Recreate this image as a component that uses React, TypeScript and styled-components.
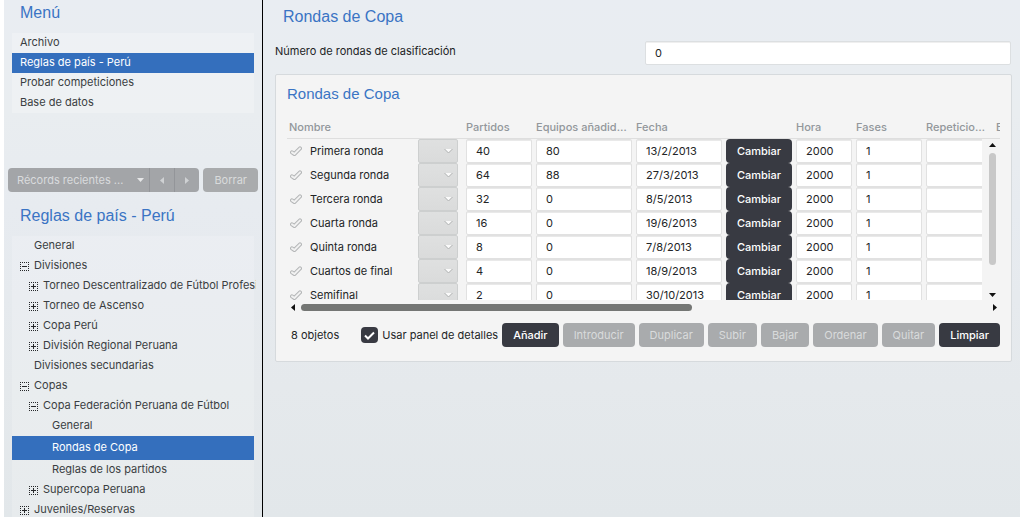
import React from "react";
import styled, { createGlobalStyle, css } from "styled-components";

const sans = `Inter, "Liberation Sans", Arial, sans-serif`;
const display = `"Liberation Sans", Arial, sans-serif`;

const GlobalStyle = createGlobalStyle`
  *, *::before, *::after { box-sizing: border-box; }
  body { margin: 0; background: #fff; }
  button, input, select { font: inherit; color: inherit; }
`;

const Page = styled.div`
  display: grid;
  grid-template-columns: 259px minmax(0, 1fr);
  height: 100vh;
  margin: 0 4px;
  overflow: hidden;
  background: linear-gradient(#e9edf2, #e9edf0 22%, #e7ebf0 40%, #e5e9ec 75%, #e2e7ea);
  color: #222426;
  font: 11px/20px ${sans};
`;

const Sidebar = styled.aside`
  display: flex;
  flex-direction: column;
  min-width: 0;
  min-height: 0;
  padding: 1px 8px 0;
  border-right: 1px solid #000;
  color: #3a3e42;
`;

const Heading = styled.h2`
  margin: 0;
  padding: 0 8px;
  font: 400 16px/24px ${display};
  color: #3a74c4;
`;

const Menu = styled.ul`
  margin: 8px 0 0;
  padding: 0;
  height: 80px;
  list-style: none;
  background: rgba(255, 255, 255, 0.22);
`;

const Tree = styled.ul`
  flex: 1;
  min-height: 0;
  margin: 8px 0 0;
  padding: 0;
  overflow: clip;
  overflow-clip-margin: 2px;
  list-style: none;
  background: rgba(255, 255, 255, 0.18);
`;

const EntryButton = styled.button<{ $active?: boolean; $tall?: boolean; $depth?: number }>`
  display: flex;
  align-items: center;
  gap: 5px;
  width: 100%;
  height: ${(p) => (p.$tall ? 24 : 20)}px;
  padding: 0 0 2px ${(p) => 8 + (p.$depth ?? 0) * 9}px;
  border: 0;
  overflow: clip;
  overflow-clip-margin: 2px;
  text-align: left;
  white-space: nowrap;
  background: ${(p) => (p.$active ? "#346fbd" : "transparent")};
  color: ${(p) => (p.$active ? "#fff" : "inherit")};
`;

const IconSlot = styled.span`
  flex: none;
  width: 9px;
  height: 9px;
  margin-top: 2px;
  line-height: 0;
`;

const Recent = styled.div`
  display: flex;
  gap: 4px;
  margin: 55px -4px 12px;
`;

const Segments = styled.div`
  display: flex;
  flex: 1;
  border-radius: 4px;
  overflow: hidden;
  background: #a3a5a8;
`;

const Segment = styled.button<{ $wide?: boolean }>`
  display: flex;
  align-items: center;
  justify-content: ${(p) => (p.$wide ? "space-between" : "center")};
  flex: ${(p) => (p.$wide ? "1" : "0 0 25px")};
  height: 24px;
  padding: ${(p) => (p.$wide ? "0 5px 0 9px" : "0")};
  border: 0;
  border-left: ${(p) => (p.$wide ? "0" : "1px solid #939599")};
  background: none;
  color: #d9dbdd;
  white-space: nowrap;
`;

const Button = styled.button<{ $block?: boolean }>`
  flex: none;
  height: 24px;
  padding: 0 11px;
  border: 0;
  border-radius: 4px;
  background: #383a42;
  color: #fff;
  font-weight: 500;
  line-height: 24px;
  white-space: nowrap;
  ${(p) => p.$block && css`display: block; width: 100%; padding: 0;`}
  &:disabled {
    background: #a9abad;
    color: #d9dbdc;
    font-weight: 400;
  }
`;

const Main = styled.main`
  min-width: 0;
  padding: 5px 8px 0 12px;
`;

const Field = styled.div`
  display: grid;
  grid-template-columns: 1fr 1fr;
  gap: 4px;
  margin: 12px 1px 9px 0;
`;

const boxed = css`
  width: 100%;
  padding: 0 9px;
  border: 1px solid #dcdfe1;
  border-radius: 2px;
  background: #fff;
  box-shadow: inset 0 1px 0 #efefef;
  outline: 0;
`;

const TextInput = styled.input`
  ${boxed}
  height: 24px;
`;

const CellInput = styled.input`
  ${boxed}
  display: block;
  height: 24px;
  border-color: #e1e1e1;
  box-shadow: inset 0 1px 0 #e9e9e9;
`;

const Panel = styled.section`
  padding: 8px 11px 14px;
  border: 1px solid #d6dadd;
  border-radius: 2px;
  background: #f4f4f4;
`;

const PanelTitle = styled.h3`
  margin: 0;
  font: 400 15px/22px ${display};
  color: #3a74c4;
`;

const Viewport = styled.div`
  position: relative;
  height: 195px;
  overflow: hidden;
`;

const Grid = styled.table`
  width: 781px;
  table-layout: fixed;
  border-collapse: separate;
  border-spacing: 0;
`;

const HeaderCell = styled.th`
  height: 34px;
  padding: 11px 8px 0 0;
  border-bottom: 1px solid #dedede;
  overflow: hidden;
  text-align: left;
  text-overflow: ellipsis;
  white-space: nowrap;
  font-weight: 500;
  color: #92979b;
  &:first-child { padding-left: 2px; }
`;

const Cell = styled.td<{ $gap?: number }>`
  height: 24px;
  padding: 0 ${(p) => p.$gap ?? 4}px 0 0;
`;

const NameBox = styled.div`
  display: flex;
  align-items: center;
  gap: 8px;
  padding-left: 3px;
`;

const SelectBox = styled.div`
  display: grid;
  align-items: center;
  > * { grid-area: 1 / 1; }
  > svg { justify-self: end; margin-right: 5px; pointer-events: none; }
`;

const Drop = styled.select`
  width: 100%;
  height: 24px;
  appearance: none;
  border: 1px solid #cdcfcf;
  border-radius: 2px;
  background: linear-gradient(#dfe0e0, #dadbdb);
  opacity: 1;
`;

const VerticalBar = styled.div`
  position: absolute;
  top: 34px;
  right: 0;
  bottom: 0;
  display: flex;
  flex-direction: column;
  align-items: center;
  justify-content: space-between;
  width: 18px;
  padding: 4px 0 3px 3px;
  background: #f4f4f4;
`;

const VerticalThumb = styled.div`
  width: 7px;
  height: 112px;
  margin: 6px 0 auto;
  border-radius: 4px;
  background: #c8c8c8;
`;

const HorizontalBar = styled.div`
  display: flex;
  align-items: center;
  height: 15px;
  padding: 0 3px 0 4px;
`;

const HorizontalThumb = styled.div`
  width: 391px;
  height: 7px;
  margin: 0 auto 0 6px;
  border-radius: 4px;
  background: #747674;
`;

const Footer = styled.footer`
  display: flex;
  align-items: center;
  gap: 4px;
  margin-top: 8px;
  padding-left: 4px;
`;

const Count = styled.span`
  margin-right: auto;
`;

const CheckLabel = styled.label`
  display: flex;
  align-items: center;
  gap: 4px;
  white-space: nowrap;
`;

const CheckBox = styled.span`
  display: grid;
  place-items: center;
  > * { grid-area: 1 / 1; }
  > svg { pointer-events: none; }
  input {
    width: 17px;
    height: 16px;
    margin: 0;
    appearance: none;
    border-radius: 4px;
    background: #383a42;
  }
`;

function Toggle({ open }: { open?: boolean }) {
  return (
    <svg width="9" height="9" viewBox="0 0 9 9">
      <path d="M0 .5H9M0 8.5H9M.5 0V9M8.5 0V9" stroke="#26282a" strokeDasharray="1 1" fill="none" />
      <path d={open ? "M2 4.5H7" : "M2 4.5H7M4.5 2V7"} stroke="#26282a" fill="none" />
    </svg>
  );
}

const arrowPaths = {
  up: "M0 4L3.5 0L7 4Z",
  down: "M0 0H7L3.5 4Z",
  left: "M4 0V7L0 3.5Z",
  right: "M0 0V7L4 3.5Z",
};

function Arrow({ to, color }: { to: keyof typeof arrowPaths; color: string }) {
  const flat = to === "up" || to === "down";
  return (
    <svg width={flat ? 7 : 4} height={flat ? 4 : 7}>
      <path d={arrowPaths[to]} fill={color} />
    </svg>
  );
}

function Tick() {
  const mark = "M2 6.4L4.4 8L10 2.4";
  return (
    <svg width="12" height="11" viewBox="0 0 12 11" fill="none" strokeLinecap="round" strokeLinejoin="round">
      <path d={mark} stroke="#b4b6b7" strokeWidth="4" />
      <path d={mark} stroke="#f1f1f1" strokeWidth="2" />
    </svg>
  );
}

const menuItems = ["Archivo", "Reglas de país - Perú", "Probar competiciones", "Base de datos"];

type TreeNode = { text: string; depth: number; toggle?: "open" | "closed"; active?: boolean };

const nodes: TreeNode[] = [
  { text: "General", depth: 0 },
  { text: "Divisiones", depth: 0, toggle: "open" },
  { text: "Torneo Descentralizado de Fútbol Profesional", depth: 1, toggle: "closed" },
  { text: "Torneo de Ascenso", depth: 1, toggle: "closed" },
  { text: "Copa Perú", depth: 1, toggle: "closed" },
  { text: "División Regional Peruana", depth: 1, toggle: "closed" },
  { text: "Divisiones secundarias", depth: 0 },
  { text: "Copas", depth: 0, toggle: "open" },
  { text: "Copa Federación Peruana de Fútbol", depth: 1, toggle: "open" },
  { text: "General", depth: 2 },
  { text: "Rondas de Copa", depth: 2, active: true },
  { text: "Reglas de los partidos", depth: 2 },
  { text: "Supercopa Peruana", depth: 1, toggle: "closed" },
  { text: "Juveniles/Reservas", depth: 0, toggle: "closed" },
];

const rounds = [
  ["Primera ronda", "40", "80", "13/2/2013"],
  ["Segunda ronda", "64", "88", "27/3/2013"],
  ["Tercera ronda", "32", "0", "8/5/2013"],
  ["Cuarta ronda", "16", "0", "19/6/2013"],
  ["Quinta ronda", "8", "0", "7/8/2013"],
  ["Cuartos de final", "4", "0", "18/9/2013"],
  ["Semifinal", "2", "0", "30/10/2013"],
];

const columnWidths = [131, 48, 70, 100, 90, 70, 60, 70, 70, 72];

const actions = [
  { text: "Añadir", enabled: true },
  { text: "Introducir" },
  { text: "Duplicar" },
  { text: "Subir" },
  { text: "Bajar" },
  { text: "Ordenar" },
  { text: "Quitar" },
  { text: "Limpiar", enabled: true },
];

export default function App() {
  return (
    <>
      <GlobalStyle />
      <Page>
        <Sidebar>
          <Heading>Menú</Heading>
          <Menu>
            {menuItems.map((item, i) => (
              <li key={item}>
                <EntryButton $active={i === 1}>{item}</EntryButton>
              </li>
            ))}
          </Menu>
          <Recent>
            <Segments>
              <Segment $wide disabled>
                Récords recientes ...
                <Arrow to="down" color="#e6e7e8" />
              </Segment>
              <Segment disabled aria-label="Anterior"><Arrow to="left" color="#cfd1d3" /></Segment>
              <Segment disabled aria-label="Siguiente"><Arrow to="right" color="#cfd1d3" /></Segment>
            </Segments>
            <Button disabled>Borrar</Button>
          </Recent>
          <Heading>Reglas de país - Perú</Heading>
          <Tree>
            {nodes.map((node, i) => (
              <li key={i}>
                <EntryButton $active={node.active} $tall={node.active} $depth={node.depth}>
                  <IconSlot>{node.toggle && <Toggle open={node.toggle === "open"} />}</IconSlot>
                  {node.text}
                </EntryButton>
              </li>
            ))}
          </Tree>
        </Sidebar>
        <Main>
          <Heading as="h1">Rondas de Copa</Heading>
          <Field>
            <label htmlFor="rounds">Número de rondas de clasificación</label>
            <TextInput id="rounds" defaultValue="0" />
          </Field>
          <Panel>
            <PanelTitle>Rondas de Copa</PanelTitle>
            <Viewport>
              <Grid>
                <colgroup>
                  {columnWidths.map((w, i) => <col key={i} width={w} />)}
                </colgroup>
                <thead>
                  <tr>
                    <HeaderCell colSpan={2}>Nombre</HeaderCell>
                    <HeaderCell>Partidos</HeaderCell>
                    <HeaderCell>Equipos añadidos</HeaderCell>
                    <HeaderCell colSpan={2}>Fecha</HeaderCell>
                    <HeaderCell>Hora</HeaderCell>
                    <HeaderCell>Fases</HeaderCell>
                    <HeaderCell>Repeticiones</HeaderCell>
                    <HeaderCell>Equipos</HeaderCell>
                  </tr>
                </thead>
                <tbody>
                  {rounds.map(([name, matches, teams, date]) => (
                    <tr key={name}>
                      <Cell><NameBox><Tick />{name}</NameBox></Cell>
                      <Cell $gap={8}>
                        <SelectBox>
                          <Drop disabled aria-label={`Opciones de ${name}`} />
                          <svg width="9" height="6">
                            <path d="M1 1H8L4.5 4.5Z" fill="#fafafa" />
                            <path d="M.5 1L4.5 5L8.5 1" fill="none" stroke="#b2b4b4" />
                          </svg>
                        </SelectBox>
                      </Cell>
                      <Cell><CellInput aria-label="Partidos" defaultValue={matches} /></Cell>
                      <Cell><CellInput aria-label="Equipos añadidos" defaultValue={teams} /></Cell>
                      <Cell><CellInput aria-label="Fecha" defaultValue={date} /></Cell>
                      <Cell><Button $block>Cambiar</Button></Cell>
                      <Cell><CellInput aria-label="Hora" defaultValue="2000" /></Cell>
                      <Cell><CellInput aria-label="Fases" defaultValue="1" /></Cell>
                      <Cell><CellInput aria-label="Repeticiones" /></Cell>
                      <Cell />
                    </tr>
                  ))}
                </tbody>
              </Grid>
              <VerticalBar>
                <Arrow to="up" color="#111" />
                <VerticalThumb />
                <Arrow to="down" color="#111" />
              </VerticalBar>
            </Viewport>
            <HorizontalBar>
              <Arrow to="left" color="#111" />
              <HorizontalThumb />
              <Arrow to="right" color="#111" />
            </HorizontalBar>
            <Footer>
              <Count>8 objetos</Count>
              <CheckLabel>
                <CheckBox>
                  <input type="checkbox" defaultChecked />
                  <svg width="11" height="9">
                    <path d="M1 4.5L4 7.5L10 1.5" fill="none" stroke="#fff" strokeWidth="2" />
                  </svg>
                </CheckBox>
                Usar panel de detalles
              </CheckLabel>
              {actions.map((a) => (
                <Button key={a.text} disabled={!a.enabled}>{a.text}</Button>
              ))}
            </Footer>
          </Panel>
        </Main>
      </Page>
    </>
  );
}
